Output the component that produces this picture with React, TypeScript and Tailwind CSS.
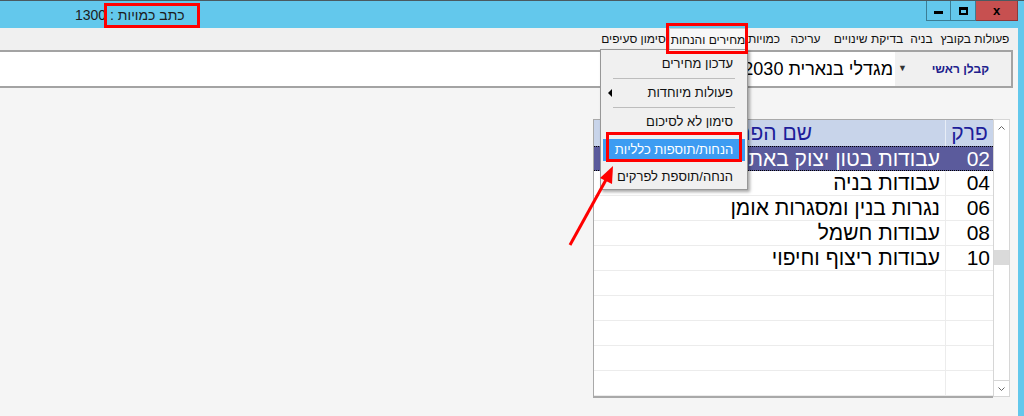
import React from 'react';

const menuBar = [
  { label: 'פעולות בקובץ', w: 'w-[78px]' },
  { label: 'בניה', w: 'w-[29px]' },
  { label: 'בדיקת שינויים', w: 'w-[77px]' },
  { label: 'עריכה', w: 'w-[49px]' },
  { label: 'כמויות', w: 'w-[34px]' },
  { label: 'מחירים והנחות', w: 'w-[78px]', open: true },
  { label: 'סימון סעיפים', w: 'w-[71px]' },
];

const rows = [
  { code: '02', name: 'עבודות בטון יצוק באתר', selected: true },
  { code: '04', name: 'עבודות בניה' },
  { code: '06', name: 'נגרות בנין ומסגרות אומן' },
  { code: '08', name: 'עבודות חשמל' },
  { code: '10', name: 'עבודות ריצוף וחיפוי' },
  { code: '', name: '' },
  { code: '', name: '' },
  { code: '', name: '' },
  { code: '', name: '' },
  { code: '', name: '' },
];

function WindowButtons() {
  return (
    <div className="flex h-[20px] self-start">
      <div className="flex w-[25px] items-center justify-center border-x border-b border-[#3b7d95]">
        <div className="mt-[3px] h-[3px] w-[9px] bg-black" />
      </div>
      <div className="flex w-[25px] items-center justify-center border-r border-b border-[#3b7d95]">
        <div className="h-[8px] w-[9px] border-2 border-t-[3px] border-black" />
      </div>
      <div className="flex w-[42px] items-center justify-center border-r border-b border-[#8c3a3a] bg-[#c75050] text-[13px] font-bold text-black">
        x
      </div>
    </div>
  );
}

export default function App() {
  return (
    <div
      className="relative flex h-[416px] w-[1024px] flex-col overflow-hidden bg-[#f5f5f5]"
      style={{ fontFamily: '"Liberation Sans", "DejaVu Sans", sans-serif' }}
    >
      {/* title bar */}
      <div className="flex h-[28px] shrink-0 border-t border-[#4a5a60] bg-[#63c8ec] pr-[6px]">
        <div dir="rtl" className="ml-[75px] mt-[4px] text-[14px] text-[#1c1c1c]">
          כתב כמויות : 1300
        </div>
        <div className="ml-auto">
          <WindowButtons />
        </div>
      </div>

      <div className="flex flex-1">
        <div className="flex flex-1 flex-col">
          {/* menu bar */}
          <div dir="rtl" className="flex h-[22px] shrink-0 bg-[#f0f0f0] pr-[4px] text-[12px] text-[#111]">
            {menuBar.map((m) => (
              <div
                key={m.label}
                className={`${m.w} flex items-center justify-center whitespace-nowrap ${
                  m.open ? 'border border-b-0 border-[#cdcdcd] bg-[#f7f7f7]' : ''
                }`}
              >
                {m.label}
              </div>
            ))}
          </div>

          {/* project strip */}
          <div dir="rtl" className="mr-[5px] flex h-[38px] shrink-0 border-y-2 border-r-2 border-[#a3a3a3] bg-white">
            <div className="flex w-[116px] items-center justify-between bg-[#f0f0f0] pl-[3px] pr-[22px]">
              <span className="text-[12px] font-bold text-[#20208c]">קבלן ראשי</span>
              <span className="text-[9px] text-[#333]">▼</span>
            </div>
            <div className="mr-[2px] flex items-center text-[18px] text-black whitespace-nowrap">
              מגדלי בנארית 2030
            </div>
          </div>

          {/* grid area */}
          <div className="flex flex-1 justify-end pr-[8px] pt-[31px]">
            <div className="flex h-[279px]">
              <div dir="rtl" className="flex w-[400px] flex-col border-l border-b-2 border-t border-[#a9a9a9] bg-white">
                <div className="flex h-[26px] shrink-0 bg-[#c8d4ea] text-[21px] text-[#1d1d9a]">
                  <div className="flex w-[48px] items-center justify-center border-l border-[#e8edf6]">פרק</div>
                  <div className="flex flex-1 items-center justify-center">שם הפרק</div>
                </div>
                {rows.map((r, i) => (
                  <div
                    key={i}
                    className={`flex h-[25px] shrink-0 text-[21px] ${
                      r.selected
                        ? 'border-y border-dotted border-black bg-[#5b5b9c] text-white'
                        : 'border-b border-[#ececec] text-black'
                    }`}
                  >
                    <div
                      className={`flex w-[48px] items-center pr-[3px] ${
                        r.selected ? '' : 'border-l border-[#ececec]'
                      }`}
                    >
                      {r.code}
                    </div>
                    <div className="flex flex-1 items-center pr-[5px] whitespace-nowrap">{r.name}</div>
                  </div>
                ))}
              </div>
              {/* scrollbar */}
              <div className="flex h-[278px] w-[17px] flex-col border border-[#d6d6d6] bg-white">
                <div className="flex h-[16px] items-center justify-center">
                  <svg width="7" height="4" viewBox="0 0 7 4"><path d="M0.5 3.5 L3.5 0.5 L6.5 3.5" fill="none" stroke="#666" /></svg>
                </div>
                <div className="h-[114px]" />
                <div className="h-[15px] bg-[#dadada]" />
                <div className="flex-1" />
                <div className="flex h-[16px] items-center justify-center border-t border-[#d6d6d6]">
                  <svg width="7" height="4" viewBox="0 0 7 4"><path d="M0.5 0.5 L3.5 3.5 L6.5 0.5" fill="none" stroke="#666" /></svg>
                </div>
              </div>
            </div>
          </div>
        </div>
        <div className="w-[6px] bg-[#63c8ec]" />
      </div>

      {/* dropdown menu */}
      <div
        dir="rtl"
        className="absolute left-[600px] top-[49px] flex w-[148px] flex-col border border-[#979797] bg-[#f0f0f0] text-[13px] text-[#111] shadow-[2px_2px_3px_rgba(0,0,0,0.35)]"
      >
        <div className="flex h-[28px] items-center pr-[14px]">עדכון מחירים</div>
        <div className="mx-[12px] h-px bg-[#bdbdbd]" />
        <div className="relative flex h-[28px] items-center pr-[14px]">
          פעולות מיוחדות
          <span className="absolute left-[7px] top-[10px] h-0 w-0 border-y-[4px] border-r-[4px] border-y-transparent border-r-black" />
        </div>
        <div className="mx-[12px] h-px bg-[#bdbdbd]" />
        <div className="flex h-[28px] items-center pr-[14px]">סימון לא לסיכום</div>
        <div className="flex h-[28px] items-center px-[2px] py-[3px]">
          <div className="flex h-full flex-1 items-center justify-center bg-[#3d9cf2] text-white">
            הנחות/תוספות כלליות
          </div>
        </div>
        <div className="flex h-[25px] items-center pr-[14px]">הנחה/תוספת לפרקים</div>
      </div>

      {/* annotations */}
      <div className="pointer-events-none absolute left-[104px] top-[3px] h-[25px] w-[96px] border-[3px] border-[#ff0000]" />
      <div className="pointer-events-none absolute left-[666px] top-[23px] h-[31px] w-[82px] border-[3px] border-[#ff0000]" />
      <div className="pointer-events-none absolute left-[606px] top-[132px] h-[30px] w-[136px] border-[3px] border-[#ff0000]" />
      <svg className="pointer-events-none absolute left-0 top-0" width="1024" height="416">
        <line x1="570" y1="245" x2="607" y2="178" stroke="#ff0000" strokeWidth="3" />
        <polygon points="613,166 600,178 612,184" fill="#ff0000" />
      </svg>
    </div>
  );
}
